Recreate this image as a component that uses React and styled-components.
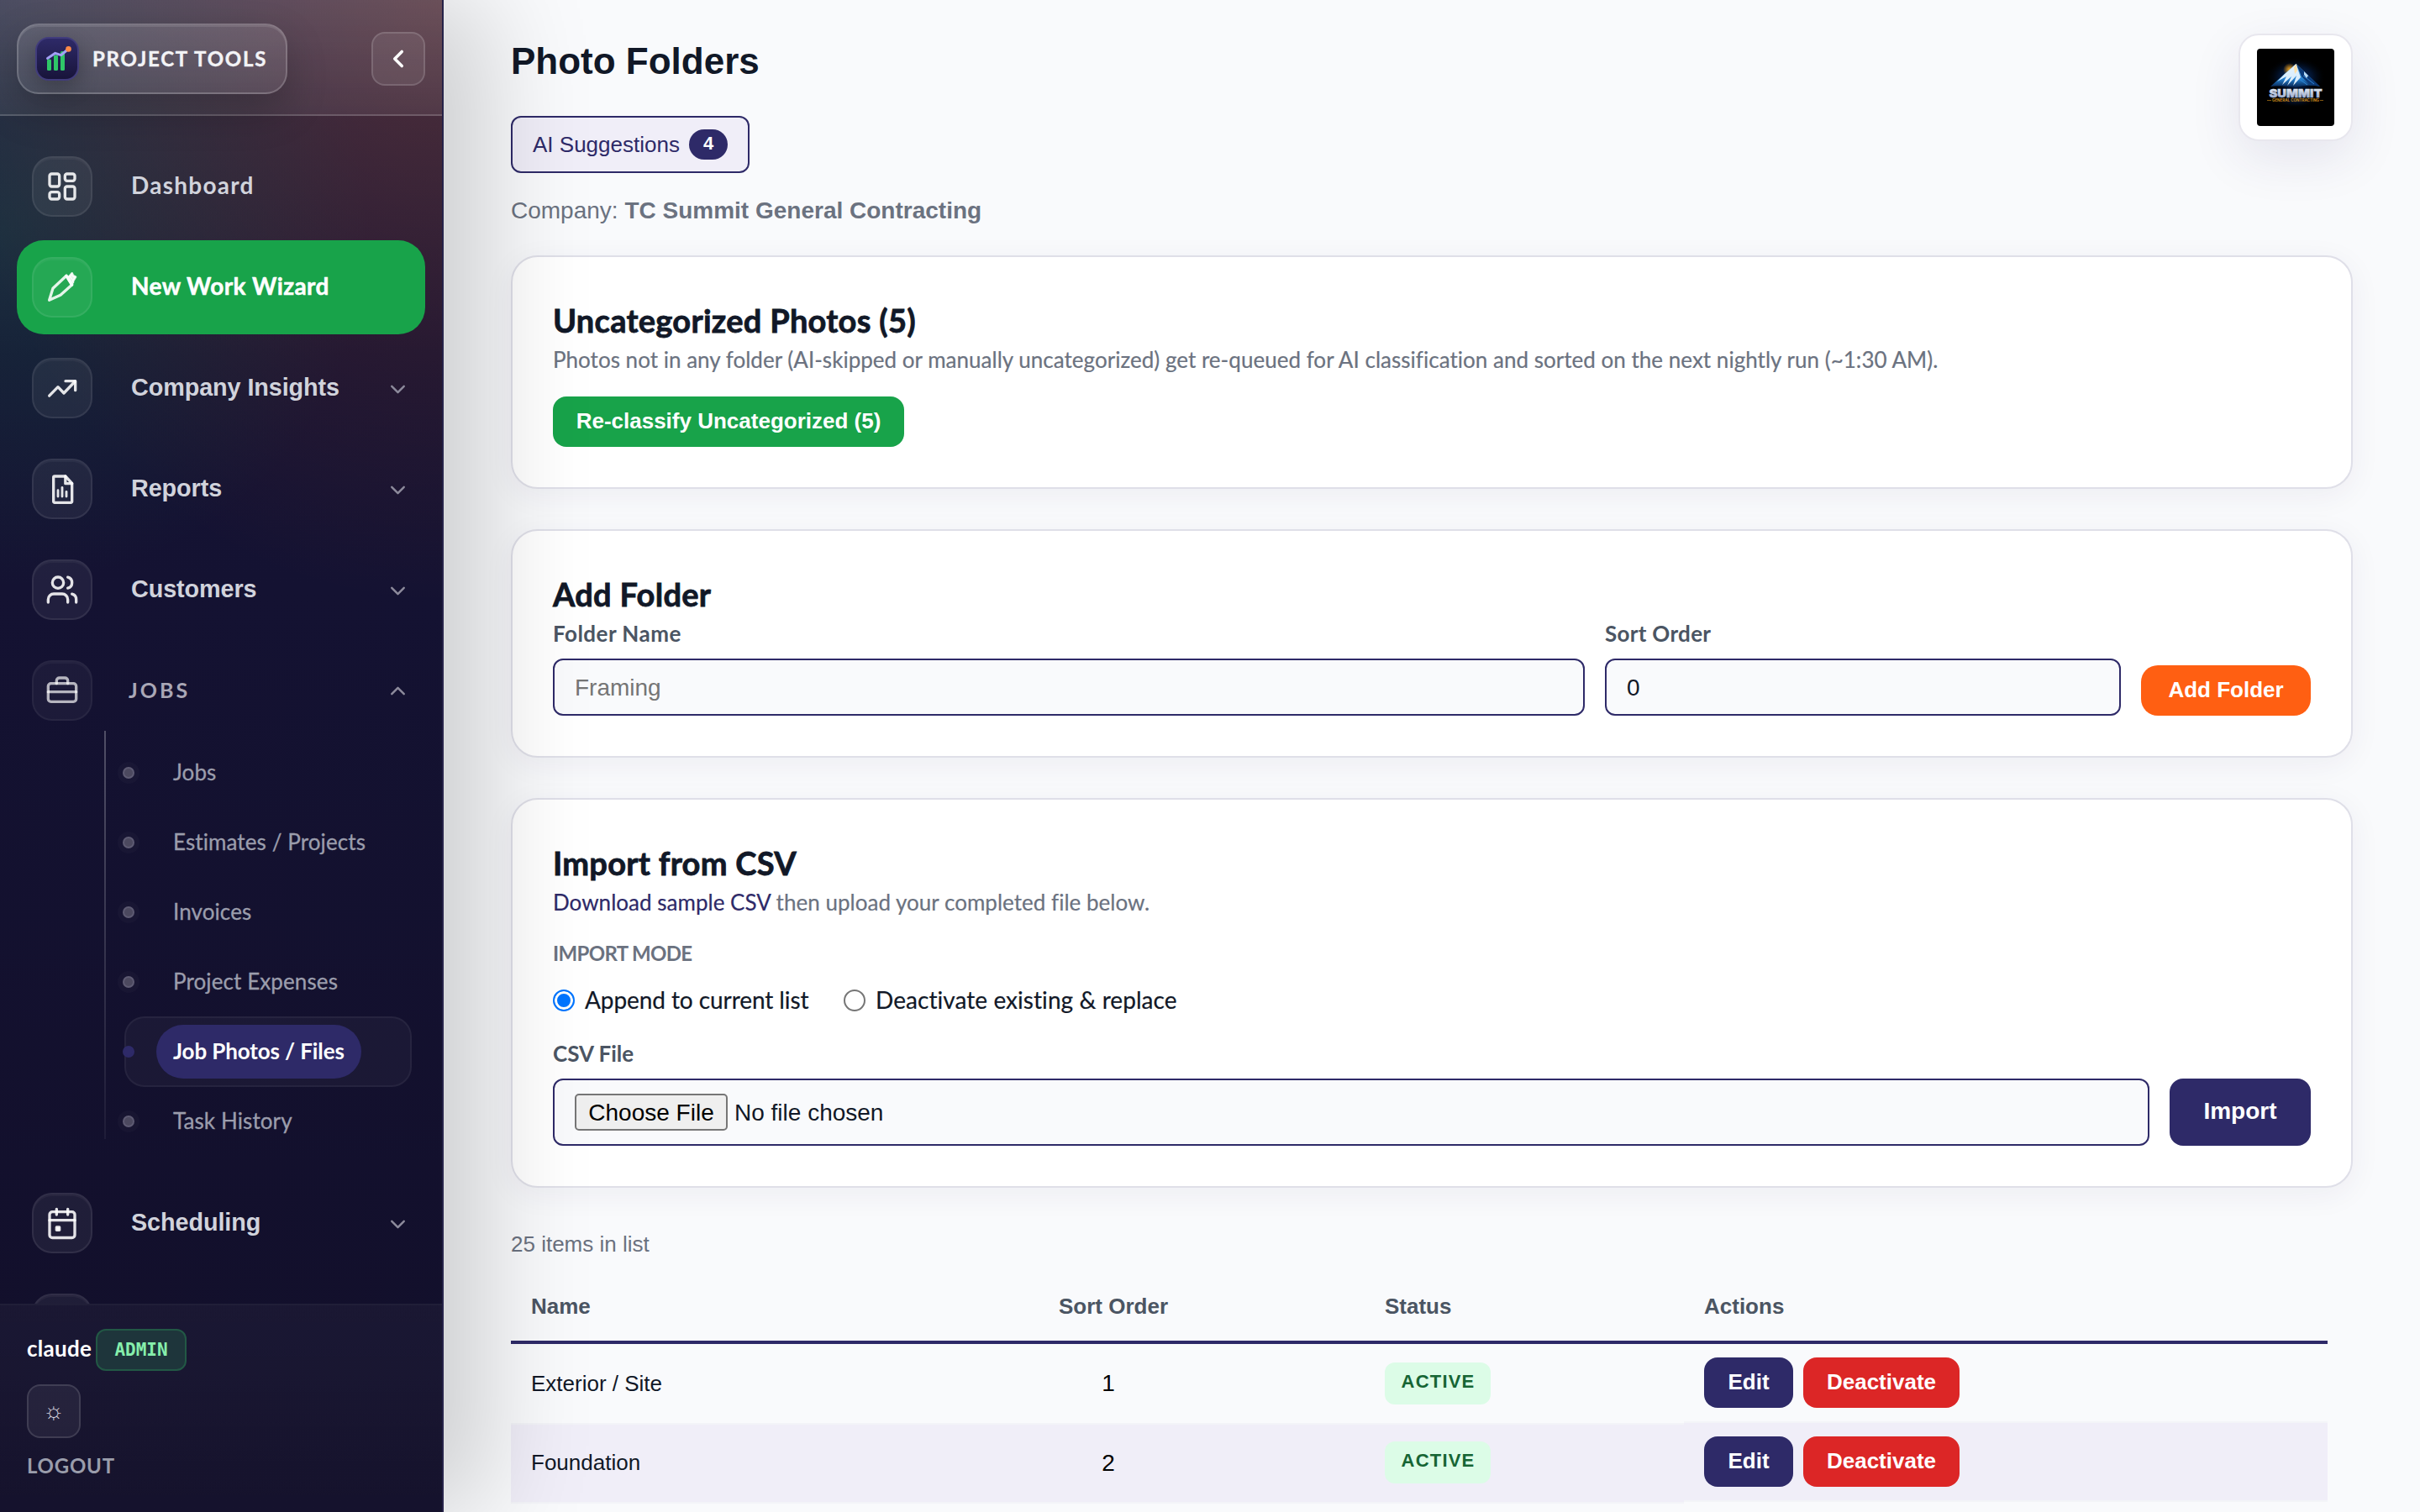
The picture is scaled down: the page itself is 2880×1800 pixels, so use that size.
import * as React from "react";
import styled, { createGlobalStyle } from "styled-components";

const GlobalStyle = createGlobalStyle`
  :root {
    --navy: #2e2a68;
    --green: #18a34a;
    --orange: #ff5f12;
    --red: #dc2626;
    --ink: #111827;
    --muted: #6b7280;
    --label: #4b5563;
    --page: #f9fafc;
    --sans: "Liberation Sans", Arial, sans-serif;
    --display: Lato, "Liberation Sans", sans-serif;
  }

  * {
    box-sizing: border-box;
  }

  body {
    margin: 0;
    background: var(--page);
    font-family: var(--sans);
    color: var(--ink);
    overflow: hidden;
  }

  h1, h2, p {
    margin: 0;
  }

  button, input {
    font-family: var(--sans);
  }
`;

const Shell = styled.div`
  display: flex;
  width: 2880px;
  height: 1800px;
  overflow: hidden;
`;

/* ---------- sidebar ---------- */

const Sidebar = styled.aside`
  position: relative;
  z-index: 2;
  flex: none;
  width: 528px;
  height: 100%;
  display: flex;
  flex-direction: column;
  border-right: 2px solid #262349;
  background: radial-gradient(
      ellipse 600px 720px at 100% 0,
      rgba(255, 95, 18, 0.19),
      rgba(255, 95, 18, 0) 100%
    ),
    radial-gradient(
      ellipse 440px 420px at 0 280px,
      rgba(34, 150, 90, 0.18),
      rgba(34, 150, 90, 0) 100%
    ),
    linear-gradient(180deg, #282646 0, #151334 420px, #141232 700px, #120f2a 100%);
  box-shadow: 48px 0 120px rgba(0, 0, 0, 0.18);
`;

const SidebarTop = styled.div`
  flex: none;
  height: 138px;
  padding: 4px 20px 0;
  display: flex;
  align-items: center;
  justify-content: space-between;
  border-bottom: 2px solid rgba(255, 255, 255, 0.1);
  background: linear-gradient(
    180deg,
    rgba(255, 255, 255, 0.15),
    rgba(255, 255, 255, 0.07)
  );
`;

const Brand = styled.div`
  width: 322px;
  height: 84px;
  padding-left: 20px;
  display: flex;
  align-items: center;
  gap: 16px;
  border: 2px solid rgba(255, 255, 255, 0.18);
  border-radius: 26px;
  background: linear-gradient(
    180deg,
    rgba(255, 255, 255, 0.12),
    rgba(255, 255, 255, 0.08)
  );
  box-shadow: inset 0 2px 0 rgba(255, 255, 255, 0.1),
    0 20px 48px rgba(0, 0, 0, 0.22);
`;

const BrandMark = styled.span`
  width: 52px;
  height: 52px;
  border-radius: 16px;
  border: 2px solid #413c7c;
  background: linear-gradient(180deg, #2e2a68, #18143a);
  box-shadow: 0 8px 24px rgba(0, 0, 0, 0.25);

  svg {
    display: block;
    margin: -2px;
  }
`;

const BrandName = styled.span`
  color: #f3f3f6;
  font: 700 24px/30px var(--display);
  letter-spacing: 1.75px;
  white-space: nowrap;
  -webkit-text-stroke: 0.4px currentColor;
`;

const SquareButton = styled.button`
  width: 64px;
  height: 64px;
  padding: 0;
  display: flex;
  align-items: center;
  justify-content: center;
  border: 2px solid rgba(255, 255, 255, 0.14);
  border-radius: 16px;
  background: rgba(255, 255, 255, 0.08);
  color: #fff;
  font-size: 26px;
`;

const Nav = styled.nav`
  flex: 1;
  min-height: 0;
  padding: 28px 20px 0;
  display: flex;
  flex-direction: column;
  gap: 8px;
  overflow: hidden;
`;

const NavItem = styled.div`
  flex: none;
  height: 112px;
  padding: 0 18px;
  display: flex;
  align-items: center;
  border-radius: 32px;
  background: ${(props) => (props.$active ? "var(--green)" : "transparent")};
`;

const NavIcon = styled.span`
  flex: none;
  width: 72px;
  height: 72px;
  display: flex;
  align-items: center;
  justify-content: center;
  border: 2px solid rgba(255, 255, 255, ${(props) => (props.$dim ? 0.05 : 0.08)});
  border-radius: 24px;
  background: rgba(255, 255, 255, ${(props) => (props.$dim ? 0.04 : 0.06)});
  box-shadow: inset 0 2px 0 rgba(255, 255, 255, 0.04);
  color: rgba(255, 255, 255, ${(props) => (props.$dim ? 0.68 : 0.88)});
`;

const NavLabel = styled.span`
  flex: 1;
  margin-left: 46px;
  padding-bottom: 5px;
  color: ${(props) => (props.$active ? "#fff" : "#d1d3dc")};
  font: 700 28px/40px var(--display);
  letter-spacing: ${(props) => props.$spacing || "0"};
  -webkit-text-stroke: ${(props) => (props.$active ? "0.5px currentColor" : "0")};
`;

const GroupLabel = styled(NavLabel)`
  padding-bottom: 3px;
  font: 700 28.8px/40px var(--sans);
  letter-spacing: -0.1px;
`;

const OpenLabel = styled(NavLabel)`
  margin-left: 43px;
  padding-bottom: 2px;
  color: #a9a7b6;
  font-size: 25px;
  letter-spacing: 3px;
`;

const Caret = styled.span`
  display: flex;
  padding-top: ${(props) => (props.$open ? "0" : "2px")};
  color: #8d8b9c;
`;

const SubNav = styled.div`
  position: relative;
  flex: none;
  margin: -8px 16px 16px 128px;
  display: flex;
  flex-direction: column;

  &::before {
    content: "";
    position: absolute;
    left: -24px;
    top: -8px;
    width: 2px;
    height: 486px;
    background: linear-gradient(
      180deg,
      rgba(255, 255, 255, 0.26),
      rgba(255, 255, 255, 0.05)
    );
  }
`;

const SubItem = styled.div`
  height: 84px;
  margin-bottom: -1px;
  display: flex;
  align-items: center;
  border: 2px solid
    ${(props) => (props.$active ? "rgba(255, 255, 255, 0.05)" : "transparent")};
  border-radius: 24px;
  background: ${(props) =>
    props.$active ? "rgba(255, 255, 255, 0.035)" : "transparent"};
`;

const Dot = styled.span`
  flex: none;
  width: 14px;
  height: 14px;
  margin-left: -4px;
  border: 2px solid ${(props) => (props.$active ? "#2e2a68" : "#5e5b73")};
  border-radius: 50%;
  background: ${(props) => (props.$active ? "#2e2a68" : "#4c495f")};
  box-shadow: ${(props) =>
    props.$active ? "none" : "0 0 0 6px rgba(255, 255, 255, 0.025)"};
`;

const Pill = styled.span`
  height: 64px;
  margin-left: 26px;
  padding: 0 20px 3px;
  display: flex;
  align-items: center;
  border-radius: 32px;
  background: ${(props) => (props.$active ? "#2e2a68" : "transparent")};
  color: ${(props) => (props.$active ? "#fff" : "#9b9dac")};
  font: ${(props) => (props.$active ? 700 : 400)} 26px/36px var(--display);
  letter-spacing: ${(props) => (props.$active ? "-0.12px" : "0.1px")};
  white-space: nowrap;
  -webkit-text-stroke: ${(props) => (props.$active ? "0" : "0.3px currentColor")};
`;

const SidebarFoot = styled.div`
  flex: none;
  height: 248px;
  padding: 28px 32px 0;
  display: flex;
  flex-direction: column;
  align-items: flex-start;
  border-top: 2px solid rgba(255, 255, 255, 0.05);
  background: linear-gradient(
    180deg,
    rgba(255, 255, 255, 0.035),
    rgba(255, 255, 255, 0.012)
  );
`;

const UserRow = styled.div`
  height: 50px;
  display: flex;
  align-items: center;
`;

const UserName = styled.span`
  width: 82px;
  padding-bottom: 5px;
  color: #fff;
  font: 700 26px/36px var(--display);
  letter-spacing: 0.28px;
`;

const RoleBadge = styled.span`
  width: 108px;
  height: 50px;
  display: flex;
  align-items: center;
  justify-content: center;
  border: 2px solid #225845;
  border-radius: 12px;
  background: #1e353b;
  color: #86efac;
  font: 700 21px/28px "DejaVu Sans Mono", "Liberation Mono", monospace;
`;

const ThemeButton = styled(SquareButton)`
  margin-top: 16px;
  border-color: rgba(255, 255, 255, 0.12);
  background: rgba(255, 255, 255, 0.06);
  color: #d5d3df;
  font-size: 28px;
`;

const Logout = styled.span`
  margin-top: 15px;
  color: #9a9dab;
  font: 700 24px/36px var(--display);
  letter-spacing: 0.75px;
`;

/* ---------- page ---------- */

const Main = styled.main`
  flex: 1;
  min-width: 0;
  padding: 40px 80px 0;
`;

const PageHead = styled.header`
  display: flex;
  justify-content: space-between;
  align-items: flex-start;
`;

const PageTitle = styled.h1`
  font: 700 44px/66px var(--sans);
`;

const SuggestionsButton = styled.button`
  width: 284px;
  height: 68px;
  margin-top: 32px;
  padding: 0 24px;
  display: flex;
  align-items: center;
  justify-content: space-between;
  border: 2px solid var(--navy);
  border-radius: 12px;
  background: #f0eef8;
  color: var(--navy);
  font-size: 26px;
`;

const Count = styled.span`
  width: 46px;
  height: 36px;
  border-radius: 18px;
  background: var(--navy);
  color: #fff;
  font: 700 22px/34px var(--sans);
  text-align: center;
`;

const CompanyLine = styled.p`
  margin: 24px 0 32px;
  color: var(--muted);
  font-size: 28px;
  line-height: 42px;
`;

const CompanyLogo = styled.div`
  width: 136px;
  height: 128px;
  padding: 16px 20px;
  border: 2px solid #e8e7ee;
  border-radius: 24px;
  background: #fff;
  box-shadow: 0 20px 60px rgba(46, 42, 104, 0.1);

  svg {
    display: block;
    border-radius: 4px;
  }
`;

const Card = styled.section`
  height: ${(props) => props.$height};
  margin-bottom: 48px;
  padding: 48px;
  border: 2px solid #dfdfe8;
  border-radius: 32px;
  background: #fff;
  box-shadow: 0 8px 36px rgba(46, 42, 80, 0.06);
`;

const CardTitle = styled.h2`
  font: 700 38px/54px var(--display);
  letter-spacing: 0.28px;
  -webkit-text-stroke: 0.8px currentColor;
`;

const CardText = styled.p`
  color: var(--muted);
  font: 400 26px/40px var(--display);
  letter-spacing: 0.02px;
  -webkit-text-stroke: 0.2px currentColor;
`;

const TextLink = styled.a`
  color: var(--navy);
`;

const Button = styled.button`
  width: ${(props) => props.$width};
  height: ${(props) => props.$height || "60px"};
  margin-top: ${(props) => props.$top || "0"};
  padding: 0 0 2px;
  border: 0;
  border-radius: ${(props) => props.$radius || "16px"};
  background: ${(props) => props.$color};
  color: #fff;
  font-size: ${(props) => props.$size || "26px"};
  font-weight: 700;
  white-space: nowrap;
`;

const FormRow = styled.div`
  display: grid;
  grid-template-columns: ${(props) => props.$columns};
  gap: 24px;
  align-items: end;
`;

const Field = styled.label`
  display: flex;
  flex-direction: column;
  gap: 10px;
`;

const FieldLabel = styled.span`
  color: var(--label);
  font: 700 26px/40px var(--display);
  letter-spacing: ${(props) => props.$spacing || "0"};
`;

const TextInput = styled.input`
  width: 100%;
  height: 68px;
  padding: 2px 24px 0;
  border: 2px solid var(--navy);
  border-radius: 12px;
  outline: 0;
  background: var(--page);
  color: var(--ink);
  font-size: 28px;

  &::placeholder {
    color: #757575;
  }
`;

const ModeTitle = styled.p`
  margin: 23px 0 18px;
  color: var(--muted);
  font: 700 24px/36px var(--display);
  letter-spacing: -0.65px;
`;

const ModeOptions = styled.div`
  height: 40px;
  margin-bottom: 23px;
  display: flex;
  align-items: center;
`;

const Option = styled.label`
  width: ${(props) => props.$width};
  display: flex;
  align-items: center;
  font: 400 28px/40px var(--display);
  letter-spacing: ${(props) => props.$spacing};
  white-space: nowrap;
  -webkit-text-stroke: 0.2px currentColor;

  span:last-child {
    padding-bottom: 3px;
  }
`;

const Radio = styled.span`
  flex: none;
  width: 26px;
  height: 26px;
  margin-right: 12px;
  border: 2px solid ${(props) => (props.$checked ? "#0075ff" : "#767676")};
  border-radius: 50%;
  background: ${(props) => (props.$checked ? "#0075ff" : "#fff")};
  box-shadow: ${(props) => (props.$checked ? "inset 0 0 0 3px #fff" : "none")};
`;

const FileBox = styled.div`
  height: 80px;
  padding: 0 24px;
  display: flex;
  align-items: center;
  gap: 8px;
  border: 2px solid var(--navy);
  border-radius: 12px;
  background: var(--page);
  font-size: 28px;
`;

const FileButton = styled.span`
  width: 182px;
  height: 44px;
  border: 2px solid #767676;
  border-radius: 5px;
  background: #efefef;
  color: #000;
  line-height: 41px;
  text-align: center;
`;

const FileName = styled.span`
  padding-top: 1px;
`;

/* ---------- table ---------- */

const ListCount = styled.p`
  margin-top: -1px;
  color: var(--muted);
  font-size: 26px;
  line-height: 40px;
`;

const Table = styled.div`
  width: 2162px;
  margin-top: 15px;
`;

const Row = styled.div`
  display: grid;
  grid-template-columns: 628px 388px 380px 1fr;
  height: 94px;
`;

const HeadRow = styled(Row)`
  height: 84px;
  border-bottom: 4px solid var(--navy);
`;

const HeadCell = styled.div`
  padding: 19px 24px 0;
  color: var(--label);
  font-size: 26px;
  font-weight: 700;
  line-height: 40px;
`;

const Cell = styled.div`
  margin-top: ${(props) => (props.$first ? "0" : "2px")};
  height: ${(props) => (props.$first ? "96px" : "94px")};
  padding: 0 24px;
  display: flex;
  align-items: center;
  border-bottom: 2px solid #f3f4f8;
  background: ${(props) => (props.$shaded ? "#f0eef8" : "transparent")};
  font-size: 26px;
`;

const NameCell = styled(Cell)`
  padding-bottom: ${(props) => (props.$first ? "0" : "1px")};
`;

const OrderCell = styled(Cell)`
  color: #000;
  font-size: 28px;
`;

const OrderValue = styled.span`
  width: 118px;
  text-align: center;
`;

const StatusCell = styled(Cell)`
  padding-top: ${(props) => (props.$first ? "0" : "2px")};
  padding-bottom: ${(props) => (props.$first ? "0" : "4px")};
`;

const ActionCell = styled(Cell)`
  margin-top: 0;
  height: 94px;
  gap: 12px;
`;

const Status = styled.span`
  width: 126px;
  height: 50px;
  padding-left: 1px;
  border-radius: 12px;
  background: #dcfce7;
  color: #166534;
  font: 700 22px/46px var(--sans);
  letter-spacing: 1.2px;
  text-align: center;
`;

/* ---------- icons ---------- */

const Icon = ({ size = 40, stroke = 2, children }) => (
  <svg
    width={size}
    height={size}
    viewBox="0 0 24 24"
    fill="none"
    stroke="currentColor"
    strokeWidth={stroke}
    strokeLinecap="round"
    strokeLinejoin="round"
  >
    {children}
  </svg>
);

const icons = {
  dashboard: (
    <Icon>
      <rect x="3" y="3" width="7" height="9" rx="1.5" />
      <rect x="14" y="3" width="7" height="5" rx="1.5" />
      <rect x="14" y="12" width="7" height="9" rx="1.5" />
      <rect x="3" y="16" width="7" height="5" rx="1.5" />
    </Icon>
  ),
  wizard: (
    <Icon>
      <path d="M2.8 21.2 L5.4 12.8 L15 3.8 L19 10.2 L10.8 17.6 Z" />
      <path d="M15 3.8 L19 10.2 M17.2 4.6 L19.6 8.4" />
      <path d="M17 4.4 L19 2 L19.8 3.8 L21.6 4.6 L19.8 7.6" fill="currentColor" strokeWidth="1.6" />
    </Icon>
  ),
  insights: (
    <Icon>
      <path d="M2.8 17.5 L9 11.2 L13.2 15.6 L21.2 7.2" />
      <path d="M14.4 7 H21.4 V13.6" />
    </Icon>
  ),
  reports: (
    <Icon>
      <path d="M14.3 3 H6.6 a.8 .8 0 0 0 -.8 .8 V21 a.8 .8 0 0 0 .8 .8 H18.2 a.8 .8 0 0 0 .8 -.8 V8 Z" />
      <path d="M14.3 3 V8.2 H19" />
      <path d="M9 13 V17.4 M12 11 V17.4 M15 14 V17.4" strokeWidth="1.7" />
    </Icon>
  ),
  customers: (
    <Icon>
      <path d="M16 21v-2a4 4 0 0 0-4-4H6a4 4 0 0 0-4 4v2" />
      <circle cx="9" cy="7" r="4" />
      <path d="M22 21v-2a4 4 0 0 0-3-3.87" />
      <path d="M16 3.13a4 4 0 0 1 0 7.75" />
    </Icon>
  ),
  jobs: (
    <Icon>
      <rect x="2" y="7" width="20" height="13" rx="2" />
      <path d="M8 7V5a2 2 0 0 1 2-2h4a2 2 0 0 1 2 2v2" />
      <path d="M2 13h20" />
    </Icon>
  ),
  scheduling: (
    <Icon>
      <rect x="3" y="4" width="18" height="18.5" rx="2" />
      <path d="M8 2v4 M16 2v4 M3 10h18" />
      <rect x="8" y="15" width="2" height="2" fill="currentColor" />
    </Icon>
  ),
};

const Chevron = ({ open }) => (
  <Icon size={29}>
    <path d={open ? "M6 15l6-6 6 6" : "M6 9l6 6 6-6"} />
  </Icon>
);

const BrandGlyph = () => (
  <svg width="52" height="52" viewBox="0 0 52 52" fill="none">
    <g fill="#2fc768">
      <rect x="14" y="26.5" width="5" height="13.5" rx="1.6" />
      <rect x="22" y="21.5" width="5" height="18.5" rx="1.6" />
      <rect x="30" y="17" width="5" height="23" rx="1.6" />
    </g>
    <path
      d="M14.5 25.5 L23.8 19.3 L30.7 21.7 L38.5 15"
      stroke="#a3a0f6"
      strokeWidth="3"
      strokeLinecap="round"
      strokeLinejoin="round"
    />
    <circle cx="39.5" cy="14.4" r="3.3" fill="#ff8a47" />
  </svg>
);

const SummitLogo = () => (
  <svg width="92" height="92" viewBox="0 0 92 92">
    <defs>
      <radialGradient id="halo">
        <stop offset="0" stopColor="#0b4fb0" stopOpacity="0.85" />
        <stop offset="0.55" stopColor="#06265c" stopOpacity="0.5" />
        <stop offset="1" stopColor="#000" stopOpacity="0" />
      </radialGradient>
      <radialGradient id="sun">
        <stop offset="0" stopColor="#ffb327" />
        <stop offset="1" stopColor="#ff9d00" stopOpacity="0" />
      </radialGradient>
      <linearGradient id="rock" x1="0" y1="0" x2="0" y2="1">
        <stop offset="0" stopColor="#8fd0f8" />
        <stop offset="0.65" stopColor="#2480cf" />
        <stop offset="1" stopColor="#06224e" />
      </linearGradient>
      <linearGradient id="steel" x1="0" y1="0" x2="0" y2="1">
        <stop offset="0" stopColor="#f4f7fb" />
        <stop offset="1" stopColor="#8fa3c8" />
      </linearGradient>
    </defs>
    <rect width="92" height="92" fill="#000" />
    <ellipse cx="46" cy="34" rx="36" ry="24" fill="url(#halo)" />
    <ellipse cx="46" cy="62" rx="26" ry="8" fill="url(#halo)" opacity="0.35" />
    <circle cx="39" cy="25" r="8" fill="url(#sun)" />
    <path
      d="M16 45 L34 29 L46.5 18 L58 29 L75 45 Q60 42 46 46 Q30 43 16 45Z"
      fill="url(#rock)"
    />
    <path d="M46.5 18 L58 29 L75 45 L62 42 L53 33 Z" fill="#0c3a78" />
    <path d="M50 36 L60 43 M55 32 L68 42" stroke="#2f86d6" strokeWidth="1" />
    <path
      d="M46.5 18 L40 24 L33 30 L24 39 L35 33 L30 43 L41 33 L36 44 L47 32 L43 44 L52 34 L49 26 Z"
      fill="#e8f5ff"
      opacity="0.92"
    />
    <path d="M44 22 L47 18 L48 26 L45 30 Z" fill="#ffe0a6" />
    <path d="M56 27 L61 32 L59 35 L56 31 Z" fill="#b9dcf7" />
    <text
      x="46"
      y="57.5"
      textAnchor="middle"
      textLength="63"
      lengthAdjust="spacingAndGlyphs"
      fontFamily="Inter, sans-serif"
      fontWeight="900"
      fontSize="13.5"
      fill="url(#steel)"
      stroke="url(#steel)"
      strokeWidth="0.5"
    >
      SUMMIT
    </text>
    <text
      x="46"
      y="63"
      textAnchor="middle"
      textLength="56"
      lengthAdjust="spacingAndGlyphs"
      fontFamily="Inter, sans-serif"
      fontWeight="700"
      fontSize="4.2"
      fill="#c98a1c"
    >
      GENERAL CONTRACTING
    </text>
    <path d="M12 61.5 H17 M75 61.5 H79" stroke="#a06c14" strokeWidth="0.8" />
  </svg>
);

const jobLinks = [
  "Jobs",
  "Estimates / Projects",
  "Invoices",
  "Project Expenses",
  "Job Photos / Files",
  "Task History",
];

const folders = [
  { name: "Exterior / Site", order: 1 },
  { name: "Foundation", order: 2 },
];

const Group = ({ icon, children }) => (
  <NavItem>
    <NavIcon>{icons[icon]}</NavIcon>
    <GroupLabel>{children}</GroupLabel>
    <Caret>
      <Chevron />
    </Caret>
  </NavItem>
);

const SideMenu = () => (
  <Sidebar>
    <SidebarTop>
      <Brand>
        <BrandMark>
          <BrandGlyph />
        </BrandMark>
        <BrandName>PROJECT TOOLS</BrandName>
      </Brand>
      <SquareButton>
        <Icon size={34} stroke={2.5}>
          <path d="M15 18l-6-6 6-6" />
        </Icon>
      </SquareButton>
    </SidebarTop>

    <Nav>
      <NavItem>
        <NavIcon>{icons.dashboard}</NavIcon>
        <NavLabel $spacing="1.25px">Dashboard</NavLabel>
      </NavItem>
      <NavItem $active>
        <NavIcon>{icons.wizard}</NavIcon>
        <NavLabel $active $spacing="0.41px">
          New Work Wizard
        </NavLabel>
      </NavItem>
      <Group icon="insights">Company Insights</Group>
      <Group icon="reports">Reports</Group>
      <Group icon="customers">Customers</Group>
      <NavItem>
        <NavIcon $dim>{icons.jobs}</NavIcon>
        <OpenLabel>JOBS</OpenLabel>
        <Caret $open>
          <Chevron open />
        </Caret>
      </NavItem>
      <SubNav>
        {jobLinks.map((label) => {
          const active = label === "Job Photos / Files";
          return (
            <SubItem key={label} $active={active}>
              <Dot $active={active} />
              <Pill $active={active}>{label}</Pill>
            </SubItem>
          );
        })}
      </SubNav>
      <Group icon="scheduling">Scheduling</Group>
      <NavItem>
        <NavIcon />
      </NavItem>
    </Nav>

    <SidebarFoot>
      <UserRow>
        <UserName>claude</UserName>
        <RoleBadge>ADMIN</RoleBadge>
      </UserRow>
      <ThemeButton>☼</ThemeButton>
      <Logout>LOGOUT</Logout>
    </SidebarFoot>
  </Sidebar>
);

const FolderTable = () => (
  <Table>
    <HeadRow>
      <HeadCell>Name</HeadCell>
      <HeadCell>Sort Order</HeadCell>
      <HeadCell>Status</HeadCell>
      <HeadCell>Actions</HeadCell>
    </HeadRow>
    {folders.map((folder, i) => {
      const look = { $first: i === 0, $shaded: i % 2 === 1 };
      return (
        <Row key={folder.name}>
          <NameCell {...look}>{folder.name}</NameCell>
          <OrderCell {...look}>
            <OrderValue>{folder.order}</OrderValue>
          </OrderCell>
          <StatusCell {...look}>
            <Status>ACTIVE</Status>
          </StatusCell>
          <ActionCell {...look}>
            <Button $width="106px" $color="var(--navy)">
              Edit
            </Button>
            <Button $width="186px" $color="var(--red)">
              Deactivate
            </Button>
          </ActionCell>
        </Row>
      );
    })}
  </Table>
);

const App = () => (
  <>
    <GlobalStyle />
    <Shell>
      <SideMenu />
      <Main>
        <PageHead>
          <div>
            <PageTitle>Photo Folders</PageTitle>
            <SuggestionsButton>
              AI Suggestions
              <Count>4</Count>
            </SuggestionsButton>
            <CompanyLine>
              Company: <strong>TC Summit General Contracting</strong>
            </CompanyLine>
          </div>
          <CompanyLogo>
            <SummitLogo />
          </CompanyLogo>
        </PageHead>

        <Card $height="278px">
          <CardTitle>Uncategorized Photos (5)</CardTitle>
          <CardText>
            Photos not in any folder (AI-skipped or manually uncategorized) get
            re-queued for AI classification and sorted on the next nightly run
            (~1:30 AM).
          </CardText>
          <Button $width="418px" $color="var(--green)" $top="24px">
            Re-classify Uncategorized (5)
          </Button>
        </Card>

        <Card $height="272px">
          <CardTitle>Add Folder</CardTitle>
          <FormRow $columns="2fr 1fr 202px">
            <Field>
              <FieldLabel $spacing="0.47px">Folder Name</FieldLabel>
              <TextInput placeholder="Framing" />
            </Field>
            <Field>
              <FieldLabel $spacing="0.3px">Sort Order</FieldLabel>
              <TextInput defaultValue="0" />
            </Field>
            <Button $width="202px" $color="var(--orange)" $radius="20px">
              Add Folder
            </Button>
          </FormRow>
        </Card>

        <Card $height="464px">
          <CardTitle>Import from CSV</CardTitle>
          <CardText>
            <TextLink>Download sample CSV</TextLink> then upload your completed
            file below.
          </CardText>
          <ModeTitle>IMPORT MODE</ModeTitle>
          <ModeOptions>
            <Option $width="346px" $spacing="-0.08px">
              <Radio $checked />
              <span>Append to current list</span>
            </Option>
            <Option $width="auto" $spacing="0.06px">
              <Radio />
              <span>Deactivate existing &amp; replace</span>
            </Option>
          </ModeOptions>
          <FormRow $columns="1fr 168px">
            <Field>
              <FieldLabel>CSV File</FieldLabel>
              <FileBox>
                <FileButton>Choose File</FileButton>
                <FileName>No file chosen</FileName>
              </FileBox>
            </Field>
            <Button
              $width="168px"
              $height="80px"
              $size="28px"
              $color="var(--navy)"
            >
              Import
            </Button>
          </FormRow>
        </Card>

        <ListCount>25 items in list</ListCount>
        <FolderTable />
      </Main>
    </Shell>
  </>
);

export default App;
